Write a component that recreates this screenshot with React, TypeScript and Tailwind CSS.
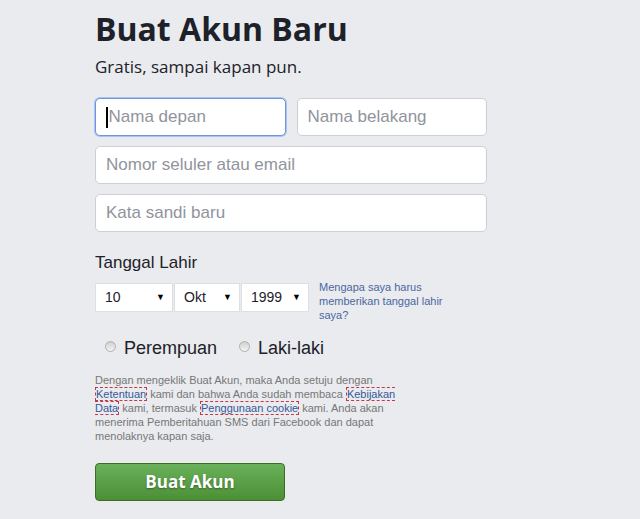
import React from 'react';

const sans = { fontFamily: '"Liberation Sans", Arial, sans-serif' };
const openSans = { fontFamily: '"Open Sans", sans-serif' };

function TextField({ placeholder, focused, grow }: { placeholder: string; focused?: boolean; grow?: boolean }) {
  return (
    <div
      className={`flex h-[38px] items-center rounded-[5px] bg-white px-[10px] text-[17px] text-[#90949c] ${
        grow ? 'flex-1' : ''
      } ${focused ? 'border border-[#6d97e0] shadow-[0_0_0_1px_#a9c2ee]' : 'border border-[#ccd0d5]'}`}
    >
      {focused && <span className="mr-[1px] h-[21px] w-[1.5px] bg-black" />}
      {placeholder}
    </div>
  );
}

function FakeSelect({ value, width }: { value: string; width: string }) {
  return (
    <div className={`flex h-[29px] ${width} items-center justify-between border border-[#dddfe2] bg-white pl-[9px] pr-[7px] text-[14px] text-[#1d2129]`}>
      <span>{value}</span>
      <span className="text-[9px] text-black">▼</span>
    </div>
  );
}

function Radio({ label }: { label: string }) {
  return (
    <label className="flex items-center gap-[8px] text-[18px] text-[#1d2129]">
      <span className="mt-[-4px] h-[11px] w-[11px] rounded-full border border-[#b0b0b0] bg-gradient-to-b from-[#d0d0d0] to-[#f4f4f4]" />
      {label}
    </label>
  );
}

function LegalLink({ children }: { children: React.ReactNode }) {
  return <span className="border border-dashed border-[#c23a4a] text-[#365899]">{children}</span>;
}

export default function App() {
  return (
    <div className="min-h-[519px] bg-[#e9ebee]" style={sans}>
      <div className="flex flex-col pl-[95px] pt-[8px]" style={{ width: 487 }}>
        <h1 className="text-[32px] font-bold leading-[42px] text-[#1d2129]" style={openSans}>
          Buat Akun Baru
        </h1>
        <p className="mt-[6px] text-[17px] leading-[22px] text-[#1d2129]" style={openSans}>
          Gratis, sampai kapan pun.
        </p>

        <div className="mt-[20px] flex flex-col gap-[10px]">
          <div className="flex gap-[11px]">
            <TextField placeholder="Nama depan" focused grow />
            <TextField placeholder="Nama belakang" grow />
          </div>
          <TextField placeholder="Nomor seluler atau email" />
          <TextField placeholder="Kata sandi baru" />
        </div>

        <div className="mt-[21px] text-[17px] leading-[20px] text-[#1d2129]">Tanggal Lahir</div>

        <div className="mt-[10px] flex items-start">
          <div className="flex gap-[1px]">
            <FakeSelect value="10" width="w-[78px]" />
            <FakeSelect value="Okt" width="w-[66px]" />
            <FakeSelect value="1999" width="w-[68px]" />
          </div>
          <div className="ml-[10px] mt-[-3px] w-[140px] text-[11px] leading-[14px] text-[#4b67a1]">
            Mengapa saya harus memberikan tanggal lahir saya?
          </div>
        </div>

        <div className="ml-[10px] mt-[13px] flex gap-[22px]">
          <Radio label="Perempuan" />
          <Radio label="Laki-laki" />
        </div>

        <p className="mt-[11px] w-[310px] text-[11px] leading-[14px] text-[#777]">
          Dengan mengeklik Buat Akun, maka Anda setuju dengan <LegalLink>Ketentuan</LegalLink> kami dan bahwa Anda
          sudah membaca <LegalLink>Kebijakan Data</LegalLink> kami, termasuk <LegalLink>Penggunaan cookie</LegalLink>{' '}
          kami. Anda akan menerima Pemberitahuan SMS dari Facebook dan dapat menolaknya kapan saja.
        </p>

        <button
          className="mt-[20px] h-[38px] w-[190px] rounded-[4px] border border-[#3b6e22] bg-gradient-to-b from-[#69b15a] to-[#4c8f35] text-[17px] font-bold text-white [text-shadow:0_1px_2px_rgba(0,0,0,0.35)]"
          style={openSans}
        >
          Buat Akun
        </button>
      </div>
    </div>
  );
}
